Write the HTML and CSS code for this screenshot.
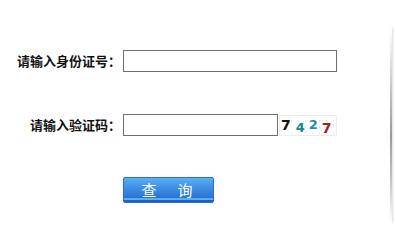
FILE: index.html
```html
<!DOCTYPE html>
<html lang="zh-CN">
<head>
<meta charset="utf-8">
<title>查询</title>
<link rel="stylesheet" href="styles.css">
</head>
<body>
<div class="page">
  <form class="form">
    <div class="row">
      <label class="label" for="idno">请输入身份证号：</label>
      <input class="input input-long" id="idno" type="text">
    </div>
    <div class="row">
      <label class="label" for="code">请输入验证码：</label>
      <input class="input input-short" id="code" type="text">
      <span class="captcha">
        <span class="d d1">7</span>
        <span class="d d2">4</span>
        <span class="d d3">2</span>
        <span class="d d4">7</span>
      </span>
    </div>
    <div class="actions">
      <button class="btn" type="button"><span>查</span><span>询</span></button>
    </div>
  </form>
  <div class="edge"></div>
</div>
</body>
</html>
```
FILE: styles.css
```css
html, body {
  margin: 0;
  padding: 0;
  background: #fff;
}
body {
  font-family: "Noto Sans CJK SC", "Noto Sans", sans-serif;
  color: #111;
}
.page {
  display: flex;
  width: 395px;
  height: 225px;
}
.form {
  flex: none;
  width: 390px;
  margin: 0;
  padding-top: 50px;
  box-sizing: border-box;
}
.row {
  display: flex;
  align-items: center;
  height: 22px;
}
.row + .row {
  margin-top: 42px;
}
.label {
  width: 121px;
  text-align: right;
  font-size: 13px;
  font-weight: bold;
  color: #111;
  line-height: 22px;
  white-space: nowrap;
}
.input {
  box-sizing: border-box;
  height: 22px;
  margin: 0 0 0 2px;
  padding: 0 3px;
  border: 1px solid #6e6e6e;
  background: #fff;
  outline: none;
}
.input-long {
  width: 214px;
}
.input-short {
  width: 155px;
}
.captcha {
  box-sizing: border-box;
  display: flex;
  align-items: flex-start;
  width: 58px;
  height: 21px;
  margin-left: 1px;
  padding-left: 1px;
  border: 1px solid #ececec;
  background:
    radial-gradient(circle, #e2e2e2 0.4px, transparent 0.7px) 1px 2px / 7px 6px,
    radial-gradient(circle, #e8e8e8 0.4px, transparent 0.7px) 4px 5px / 9px 7px,
    #fff;
  font-family: "DejaVu Sans", sans-serif;
  font-weight: bold;
}
.d {
  display: block;
  line-height: 1;
}
.d1 {
  color: #111;
  font-size: 14px;
  margin-top: 2px;
}
.d2 {
  color: #16888a;
  font-size: 13px;
  margin-top: 5px;
  margin-left: 5px;
}
.d3 {
  color: #1f9292;
  font-size: 13px;
  margin-top: 2px;
  margin-left: 4px;
}
.d4 {
  color: #a52222;
  font-size: 14px;
  margin-top: 5px;
  margin-left: 4px;
}
.actions {
  margin-top: 41px;
  padding-left: 123px;
  height: 26px;
}
.btn {
  box-sizing: border-box;
  display: flex;
  align-items: center;
  justify-content: center;
  gap: 21px;
  width: 91px;
  height: 26px;
  margin: 0;
  padding: 0 3px 1px 0;
  border: 1px solid #2a6fcf;
  border-radius: 2px;
  background: linear-gradient(to bottom, #5ab0f3 0%, #3f8fe6 40%, #2c74d7 80%, #2a6dd2 84%, #6cc6f4 86%, #6cc6f4 89%, #2361c6 92%, #1f5bc2 100%);
  color: #fff;
  font-family: "Noto Sans CJK SC", sans-serif;
  font-size: 15px;
  line-height: 1;
  cursor: pointer;
}
.edge {
  flex: none;
  width: 2px;
  height: 195px;
  margin-top: 28px;
  background: linear-gradient(to bottom, rgba(170,170,170,0) 0%, #c8c8c8 30%, #9a9a9a 55%, #c8c8c8 80%, rgba(200,200,200,0) 100%);
  box-shadow: 1px 0 2px rgba(180,180,180,0.5);
}
```
